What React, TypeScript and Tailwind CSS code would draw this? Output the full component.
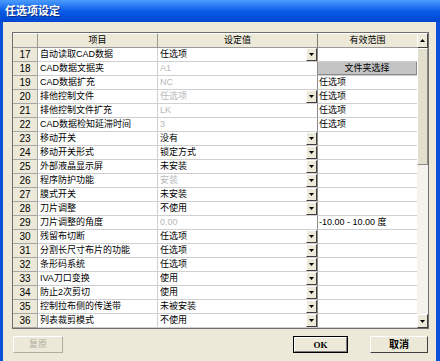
import React from "react";

type Row = {
  n: number;
  item: string;
  val: string;
  dis?: boolean;
  arrow?: boolean;
  range?: string;
  btn?: boolean;
};

const rows: Row[] = [
  { n: 17, item: "自动读取CAD数据", val: "任选项", arrow: true },
  { n: 18, item: "CAD数据文据夹", val: "A1", dis: true, btn: true },
  { n: 19, item: "CAD数据扩充", val: "NC", dis: true, range: "任选项" },
  { n: 20, item: "排他控制文件", val: "任选项", dis: true, arrow: true, range: "任选项" },
  { n: 21, item: "排他控制文件扩充", val: "LK", dis: true, range: "任选项" },
  { n: 22, item: "CAD数据检知延滞时间", val: "3", dis: true, range: "任选项" },
  { n: 23, item: "移动开关", val: "没有", arrow: true },
  { n: 24, item: "移动开关形式", val: "锁定方式", arrow: true },
  { n: 25, item: "外部液晶显示屏", val: "未安装", arrow: true },
  { n: 26, item: "程序防护功能", val: "安装", dis: true, arrow: true },
  { n: 27, item: "膜式开关", val: "未安装", arrow: true },
  { n: 28, item: "刀片调整", val: "不使用", arrow: true },
  { n: 29, item: "刀片调整的角度", val: "0.00", dis: true, range: "-10.00 - 10.00 度" },
  { n: 30, item: "残留布切断", val: "任选项", arrow: true },
  { n: 31, item: "分割长尺寸布片的功能", val: "任选项", arrow: true },
  { n: 32, item: "条形码系统", val: "任选项", arrow: true },
  { n: 33, item: "IVA刀口变换", val: "使用", arrow: true },
  { n: 34, item: "防止2次剪切", val: "使用", arrow: true },
  { n: 35, item: "控制拉布侧的传送带", val: "未被安装", arrow: true },
  { n: 36, item: "列表裁剪模式", val: "不使用", arrow: true },
];

function DropArrow() {
  return (
    <div className="w-[11px] h-[13px] shrink-0 bg-[#ece9d8] border-t border-l border-t-white border-l-white border-r border-b border-r-[#404040] border-b-[#404040] flex items-center justify-center">
      <svg width="5" height="3" viewBox="0 0 5 3">
        <path d="M0 0h5L2.5 3z" fill="#000" />
      </svg>
    </div>
  );
}

function ScrollBtn({ up, h }: { up: boolean; h: string }) {
  return (
    <div
      className={`${h} w-full bg-[#ece9d8] border-t border-l border-t-white border-l-white border-r border-b border-r-[#404040] border-b-[#404040] flex items-center justify-center`}
    >
      <svg width="5" height="3" viewBox="0 0 5 3">
        {up ? <path d="M2.5 0L5 3H0z" fill="#000" /> : <path d="M0 0h5L2.5 3z" fill="#000" />}
      </svg>
    </div>
  );
}

export default function App() {
  return (
    <div
      className="w-[440px] h-[361px] flex flex-col overflow-hidden text-[9px] leading-[13px] text-black"
      style={{ fontFamily: '"Liberation Sans", "Noto Sans CJK SC", sans-serif' }}
    >
      {/* Title bar */}
      <div className="h-[22px] shrink-0 bg-gradient-to-b from-[#4a9cff] via-[#0a5ce8] to-[#0046d0] flex items-center pl-[5px]">
        <span className="text-white font-bold text-[11px] leading-[14px] [text-shadow:1px_1px_0_#0a2a80]">
          任选项设定
        </span>
      </div>

      {/* Body */}
      <div className="flex-1 flex flex-col bg-[#ece9d8] border-l-[3px] border-r-[4px] border-[#0a50d8] pl-[9px] pr-[7px] pt-[10px]">
        {/* Grid */}
        <div className="w-[417px] h-[297px] border border-[#6f6f6f] flex bg-white">
          <div className="flex flex-col">
            {/* Header */}
            <div className="flex h-[15px] bg-[#ece9d8]">
              <div className="w-[25px] h-full border-r border-b border-[#9a9a9a] border-t border-t-white" />
              <div className="w-[120px] h-full border-r border-b border-[#9a9a9a] border-t border-t-white text-center leading-[12px]">
                项目
              </div>
              <div className="w-[160px] h-full border-r border-b border-[#7a7a7a] border-b-[#9a9a9a] border-t border-t-white text-center leading-[12px]">
                设定值
              </div>
              <div className="w-[99px] h-full border-b border-[#9a9a9a] border-t border-t-white text-center leading-[12px]">
                有效范围
              </div>
            </div>
            {rows.map((r) => (
              <div key={r.n} className="flex h-[14px]">
                <div className="w-[25px] h-full bg-[#ece9d8] border-r border-b border-[#a8a8a8] text-center text-[10px]">
                  {r.n}
                </div>
                <div className="w-[120px] h-full bg-white border-r border-b border-[#cfcfcf] pl-[2px] whitespace-nowrap overflow-hidden">
                  {r.item}
                </div>
                <div className="w-[160px] h-full bg-white border-r border-r-[#8a8a8a] border-b border-b-[#cfcfcf] flex justify-between">
                  <span className={`pl-[2px] whitespace-nowrap ${r.dis ? "text-[#b8b8b8]" : ""}`}>{r.val}</span>
                  {r.arrow && <DropArrow />}
                </div>
                <div className="w-[99px] h-full bg-white border-b border-[#cfcfcf] pl-[1px] whitespace-nowrap">
                  {r.btn ? (
                    <div className="-ml-[1px] h-[13px] w-[99px] bg-[#c4c4c4] border-r border-b border-[#8a8a8a] text-center leading-[12px]">
                      文件夹选择
                    </div>
                  ) : (
                    r.range
                  )}
                </div>
              </div>
            ))}
          </div>
          {/* Scrollbar */}
          <div className="w-[11px] flex flex-col bg-[#f3f2ec]">
            <ScrollBtn up h="h-[15px]" />
            <div className="h-[117px] w-full bg-[#e2dfcf] border-t border-l border-t-white border-l-white border-r border-b border-r-[#8a8a8a] border-b-[#8a8a8a]" />
            <div className="flex-1" />
            <ScrollBtn up={false} h="h-[14px]" />
          </div>
        </div>

        {/* Buttons */}
        <div className="mt-[7px] h-[17px] flex">
          <div className="ml-[1px] w-[50px] h-full bg-[#ece9d8] border border-t-white border-l-white border-r-[#b0aea2] border-b-[#b0aea2] flex items-center justify-center text-[#b0aea2] text-[9px]">
            复原
          </div>
          <div className="ml-[230px] w-[55px] h-full border border-black bg-[#ece9d8] flex">
            <div className="flex-1 border border-t-white border-l-white border-r-[#7a7a7a] border-b-[#7a7a7a] flex items-center justify-center text-[9px] font-bold leading-[10px]" style={{ fontFamily: '"Liberation Serif", serif' }}>
              OK
            </div>
          </div>
          <div className="ml-[22px] w-[58px] h-full bg-[#ece9d8] border border-t-white border-l-white border-r-[#404040] border-b-[#404040] flex items-center justify-center text-[10px] font-bold">
            取消
          </div>
        </div>
      </div>
    </div>
  );
}
